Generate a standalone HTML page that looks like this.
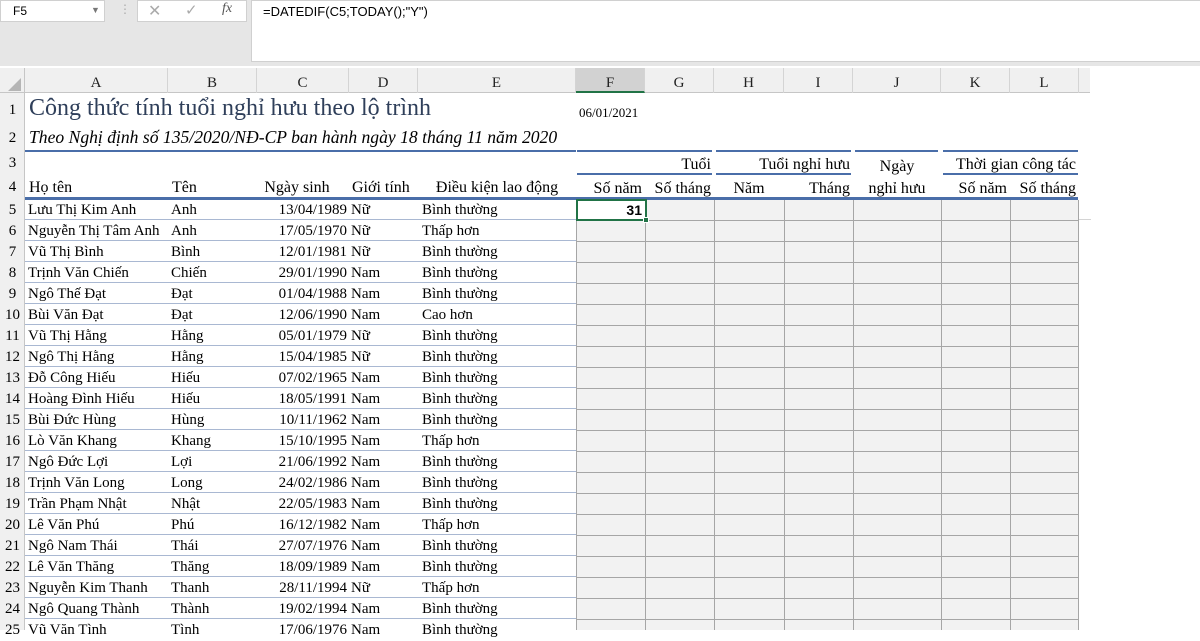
<!DOCTYPE html>
<html><head><meta charset="utf-8"><style>
*{margin:0;padding:0;box-sizing:border-box}
body{width:1200px;height:630px;overflow:hidden;background:#fff;position:relative;font-family:"Liberation Serif",serif;color:#000}
.a{position:absolute;white-space:nowrap}
.top{left:0;top:0;width:1200px;height:66px;background:#e6e6e6}
.hdr{left:0;top:68px;width:1090px;height:25px;background:#f0f0f0;border-bottom:1px solid #c6c6c6}
.ch{position:absolute;top:68px;height:25px;line-height:30px;text-align:center;font-size:15px;border-right:1px solid #d4d4d4;color:#222}
.rn{position:absolute;left:0;width:25px;background:#f0f0f0;border-right:1px solid #c6c6c6;font-size:15px;text-align:center;color:#222}
.t{position:absolute;font-size:15px;white-space:nowrap;line-height:21px}
.hl{position:absolute;height:2px;background:#4a6ea9}
.g{position:absolute;left:25px;width:551px;height:1px;background:#a9b8d2}
</style></head><body>
<div class="a top"></div>
<div class="a" style="left:0;top:0;width:105px;height:22px;background:#fff;border:1px solid #d0d0d0;font-family:'Liberation Sans',sans-serif;font-size:12px;line-height:20px;padding-left:12px">F5</div>
<div class="a" style="left:91px;top:5px;font-size:9px;color:#777">▼</div>
<div class="a" style="left:119px;top:2px;font-size:12px;color:#aaa">⋮</div>
<div class="a" style="left:137px;top:0;width:110px;height:22px;background:#fff;border:1px solid #d0d0d0"></div>
<div class="a" style="left:148px;top:1px;font-family:'Liberation Sans',sans-serif;font-size:16px;color:#aaa">✕</div>
<div class="a" style="left:185px;top:1px;font-family:'DejaVu Sans',sans-serif;font-size:15px;color:#aaa">✓</div>
<div class="a" style="left:222px;top:1px;font-size:14px;font-style:italic;color:#555">fx</div>
<div class="a" style="left:251px;top:0;width:949px;height:62px;background:#fff;border:1px solid #d0d0d0;border-right:none;font-family:'Liberation Sans',sans-serif;font-size:13px;padding:3px 0 0 11px">=DATEDIF(C5;TODAY();"Y")</div>
<div class="a hdr"></div>
<div class="a" style="left:0;top:68px;width:25px;height:25px;border-right:1px solid #c6c6c6"></div>
<div class="a" style="left:8px;top:78px;width:0;height:0;border-left:13px solid transparent;border-bottom:13px solid #b5b5b5"></div>
<div class="ch" style="left:25px;width:143px">A</div>
<div class="ch" style="left:168px;width:89px">B</div>
<div class="ch" style="left:257px;width:92px">C</div>
<div class="ch" style="left:349px;width:69px">D</div>
<div class="ch" style="left:418px;width:158px">E</div>
<div class="ch" style="left:576px;width:69px;background:#d2d2d2;border-bottom:2px solid #217346">F</div>
<div class="ch" style="left:645px;width:69px">G</div>
<div class="ch" style="left:714px;width:70px">H</div>
<div class="ch" style="left:784px;width:69px">I</div>
<div class="ch" style="left:853px;width:88px">J</div>
<div class="ch" style="left:941px;width:69px">K</div>
<div class="ch" style="left:1010px;width:69px">L</div>

<div class="rn" style="top:93px;height:537px"></div>
<div class="t" style="left:0;width:25px;text-align:center;top:100px">1</div>
<div class="t" style="left:0;width:25px;text-align:center;top:128px">2</div>
<div class="t" style="left:0;width:25px;text-align:center;top:153px">3</div>
<div class="t" style="left:0;width:25px;text-align:center;top:177px">4</div>

<div class="a" style="left:29px;top:95px;font-size:24px;color:#2f3f5a">Công thức tính tuổi nghỉ hưu theo lộ trình</div>
<div class="t" style="left:579px;top:102px;font-size:13px">06/01/2021</div>
<div class="a" style="left:29px;top:127px;font-size:17.6px;font-style:italic">Theo Nghị định số 135/2020/NĐ-CP ban hành ngày 18 tháng 11 năm 2020</div>

<div class="hl" style="left:25px;top:150px;width:551px"></div>
<div class="hl" style="left:577px;top:150px;width:135px"></div>
<div class="hl" style="left:716px;top:150px;width:135px"></div>
<div class="hl" style="left:855px;top:150px;width:83px"></div>
<div class="hl" style="left:943px;top:150px;width:135px"></div>
<div class="hl" style="left:577px;top:173px;width:135px"></div>
<div class="hl" style="left:716px;top:173px;width:135px"></div>
<div class="hl" style="left:943px;top:173px;width:135px"></div>
<div class="a" style="left:25px;top:197px;width:1053px;height:3px;background:#4a6ea9"></div>

<div class="t" style="left:645px;width:66px;text-align:right;top:154px;font-size:16px">Tuổi</div>
<div class="t" style="left:714px;width:136px;text-align:right;top:154px;font-size:16px">Tuổi nghỉ hưu</div>
<div class="t" style="left:853px;width:88px;text-align:center;top:156px;font-size:16px">Ngày</div>
<div class="t" style="left:941px;width:135px;text-align:right;top:154px;font-size:16px">Thời gian công tác</div>
<div class="t" style="left:29px;top:177px;font-size:16px">Họ tên</div>
<div class="t" style="left:172px;top:177px;font-size:16px">Tên</div>
<div class="t" style="left:257px;width:80px;text-align:center;top:177px;font-size:16px">Ngày sinh</div>
<div class="t" style="left:352px;top:177px;font-size:16px">Giới tính</div>
<div class="t" style="left:418px;width:158px;text-align:center;top:177px;font-size:16px">Điều kiện lao động</div>
<div class="t" style="left:576px;width:66px;text-align:right;top:178px;font-size:16px">Số năm</div>
<div class="t" style="left:645px;width:66px;text-align:right;top:178px;font-size:16px">Số tháng</div>
<div class="t" style="left:714px;width:70px;text-align:center;top:178px;font-size:16px">Năm</div>
<div class="t" style="left:784px;width:66px;text-align:right;top:178px;font-size:16px">Tháng</div>
<div class="t" style="left:853px;width:88px;text-align:center;top:178px;font-size:16px">nghỉ hưu</div>
<div class="t" style="left:941px;width:66px;text-align:right;top:178px;font-size:16px">Số năm</div>
<div class="t" style="left:1010px;width:66px;text-align:right;top:178px;font-size:16px">Số tháng</div>

<div class="a" style="left:576px;top:200px;width:503px;height:430px;background:#f2f2f2;
background-image:linear-gradient(#a6a6a6,#a6a6a6),linear-gradient(#a6a6a6,#a6a6a6),linear-gradient(#a6a6a6,#a6a6a6),linear-gradient(#a6a6a6,#a6a6a6),linear-gradient(#a6a6a6,#a6a6a6),linear-gradient(#a6a6a6,#a6a6a6),linear-gradient(#a6a6a6,#a6a6a6),linear-gradient(#a6a6a6,#a6a6a6),repeating-linear-gradient(to bottom,transparent 0,transparent 20px,#a6a6a6 20px,#a6a6a6 21px);
background-size:1px 100%,1px 100%,1px 100%,1px 100%,1px 100%,1px 100%,1px 100%,1px 100%,100% 100%;
background-position:0 0,69px 0,138px 0,208px 0,277px 0,365px 0,434px 0,502px 0,0 0;background-repeat:no-repeat"></div>
<div class="a" style="left:1079px;top:219px;width:12px;height:1px;background:#d4d4d4"></div>
<div class="a" style="left:576px;top:199px;width:71px;height:22px;border:2px solid #217346;background:#fff;font-family:'Liberation Sans',sans-serif;font-weight:bold;font-size:14px;text-align:right;padding-right:3px;line-height:18px">31</div>
<div class="a" style="left:643px;top:217px;width:6px;height:6px;background:#217346;border:1px solid #fff"></div>

<div class="g" style="top:219px"></div><div class="g" style="top:240px"></div><div class="g" style="top:261px"></div><div class="g" style="top:282px"></div><div class="g" style="top:303px"></div><div class="g" style="top:324px"></div><div class="g" style="top:345px"></div><div class="g" style="top:366px"></div><div class="g" style="top:387px"></div><div class="g" style="top:408px"></div><div class="g" style="top:429px"></div><div class="g" style="top:450px"></div><div class="g" style="top:471px"></div><div class="g" style="top:492px"></div><div class="g" style="top:513px"></div><div class="g" style="top:534px"></div><div class="g" style="top:555px"></div><div class="g" style="top:576px"></div><div class="g" style="top:597px"></div><div class="g" style="top:618px"></div>
<div style="position:absolute;left:0;top:200px;width:576px;font-size:15px;line-height:21px">
<div style="position:relative;height:21px"><span class="t" style="left:0;width:25px;text-align:center">5</span><span class="t" style="left:28px">Lưu Thị Kim Anh</span><span class="t" style="left:171px">Anh</span><span class="t" style="left:257px;width:90px;text-align:right">13/04/1989</span><span class="t" style="left:351px">Nữ</span><span class="t" style="left:422px">Bình thường</span></div>
<div style="position:relative;height:21px"><span class="t" style="left:0;width:25px;text-align:center">6</span><span class="t" style="left:28px">Nguyễn Thị Tâm Anh</span><span class="t" style="left:171px">Anh</span><span class="t" style="left:257px;width:90px;text-align:right">17/05/1970</span><span class="t" style="left:351px">Nữ</span><span class="t" style="left:422px">Thấp hơn</span></div>
<div style="position:relative;height:21px"><span class="t" style="left:0;width:25px;text-align:center">7</span><span class="t" style="left:28px">Vũ Thị Bình</span><span class="t" style="left:171px">Bình</span><span class="t" style="left:257px;width:90px;text-align:right">12/01/1981</span><span class="t" style="left:351px">Nữ</span><span class="t" style="left:422px">Bình thường</span></div>
<div style="position:relative;height:21px"><span class="t" style="left:0;width:25px;text-align:center">8</span><span class="t" style="left:28px">Trịnh Văn Chiến</span><span class="t" style="left:171px">Chiến</span><span class="t" style="left:257px;width:90px;text-align:right">29/01/1990</span><span class="t" style="left:351px">Nam</span><span class="t" style="left:422px">Bình thường</span></div>
<div style="position:relative;height:21px"><span class="t" style="left:0;width:25px;text-align:center">9</span><span class="t" style="left:28px">Ngô Thế Đạt</span><span class="t" style="left:171px">Đạt</span><span class="t" style="left:257px;width:90px;text-align:right">01/04/1988</span><span class="t" style="left:351px">Nam</span><span class="t" style="left:422px">Bình thường</span></div>
<div style="position:relative;height:21px"><span class="t" style="left:0;width:25px;text-align:center">10</span><span class="t" style="left:28px">Bùi Văn Đạt</span><span class="t" style="left:171px">Đạt</span><span class="t" style="left:257px;width:90px;text-align:right">12/06/1990</span><span class="t" style="left:351px">Nam</span><span class="t" style="left:422px">Cao hơn</span></div>
<div style="position:relative;height:21px"><span class="t" style="left:0;width:25px;text-align:center">11</span><span class="t" style="left:28px">Vũ Thị Hằng</span><span class="t" style="left:171px">Hằng</span><span class="t" style="left:257px;width:90px;text-align:right">05/01/1979</span><span class="t" style="left:351px">Nữ</span><span class="t" style="left:422px">Bình thường</span></div>
<div style="position:relative;height:21px"><span class="t" style="left:0;width:25px;text-align:center">12</span><span class="t" style="left:28px">Ngô Thị Hằng</span><span class="t" style="left:171px">Hằng</span><span class="t" style="left:257px;width:90px;text-align:right">15/04/1985</span><span class="t" style="left:351px">Nữ</span><span class="t" style="left:422px">Bình thường</span></div>
<div style="position:relative;height:21px"><span class="t" style="left:0;width:25px;text-align:center">13</span><span class="t" style="left:28px">Đỗ Công Hiếu</span><span class="t" style="left:171px">Hiếu</span><span class="t" style="left:257px;width:90px;text-align:right">07/02/1965</span><span class="t" style="left:351px">Nam</span><span class="t" style="left:422px">Bình thường</span></div>
<div style="position:relative;height:21px"><span class="t" style="left:0;width:25px;text-align:center">14</span><span class="t" style="left:28px">Hoàng Đình Hiếu</span><span class="t" style="left:171px">Hiếu</span><span class="t" style="left:257px;width:90px;text-align:right">18/05/1991</span><span class="t" style="left:351px">Nam</span><span class="t" style="left:422px">Bình thường</span></div>
<div style="position:relative;height:21px"><span class="t" style="left:0;width:25px;text-align:center">15</span><span class="t" style="left:28px">Bùi Đức Hùng</span><span class="t" style="left:171px">Hùng</span><span class="t" style="left:257px;width:90px;text-align:right">10/11/1962</span><span class="t" style="left:351px">Nam</span><span class="t" style="left:422px">Bình thường</span></div>
<div style="position:relative;height:21px"><span class="t" style="left:0;width:25px;text-align:center">16</span><span class="t" style="left:28px">Lò Văn Khang</span><span class="t" style="left:171px">Khang</span><span class="t" style="left:257px;width:90px;text-align:right">15/10/1995</span><span class="t" style="left:351px">Nam</span><span class="t" style="left:422px">Thấp hơn</span></div>
<div style="position:relative;height:21px"><span class="t" style="left:0;width:25px;text-align:center">17</span><span class="t" style="left:28px">Ngô Đức Lợi</span><span class="t" style="left:171px">Lợi</span><span class="t" style="left:257px;width:90px;text-align:right">21/06/1992</span><span class="t" style="left:351px">Nam</span><span class="t" style="left:422px">Bình thường</span></div>
<div style="position:relative;height:21px"><span class="t" style="left:0;width:25px;text-align:center">18</span><span class="t" style="left:28px">Trịnh Văn Long</span><span class="t" style="left:171px">Long</span><span class="t" style="left:257px;width:90px;text-align:right">24/02/1986</span><span class="t" style="left:351px">Nam</span><span class="t" style="left:422px">Bình thường</span></div>
<div style="position:relative;height:21px"><span class="t" style="left:0;width:25px;text-align:center">19</span><span class="t" style="left:28px">Trần Phạm Nhật</span><span class="t" style="left:171px">Nhật</span><span class="t" style="left:257px;width:90px;text-align:right">22/05/1983</span><span class="t" style="left:351px">Nam</span><span class="t" style="left:422px">Bình thường</span></div>
<div style="position:relative;height:21px"><span class="t" style="left:0;width:25px;text-align:center">20</span><span class="t" style="left:28px">Lê Văn Phú</span><span class="t" style="left:171px">Phú</span><span class="t" style="left:257px;width:90px;text-align:right">16/12/1982</span><span class="t" style="left:351px">Nam</span><span class="t" style="left:422px">Thấp hơn</span></div>
<div style="position:relative;height:21px"><span class="t" style="left:0;width:25px;text-align:center">21</span><span class="t" style="left:28px">Ngô Nam Thái</span><span class="t" style="left:171px">Thái</span><span class="t" style="left:257px;width:90px;text-align:right">27/07/1976</span><span class="t" style="left:351px">Nam</span><span class="t" style="left:422px">Bình thường</span></div>
<div style="position:relative;height:21px"><span class="t" style="left:0;width:25px;text-align:center">22</span><span class="t" style="left:28px">Lê Văn Thăng</span><span class="t" style="left:171px">Thăng</span><span class="t" style="left:257px;width:90px;text-align:right">18/09/1989</span><span class="t" style="left:351px">Nam</span><span class="t" style="left:422px">Bình thường</span></div>
<div style="position:relative;height:21px"><span class="t" style="left:0;width:25px;text-align:center">23</span><span class="t" style="left:28px">Nguyễn Kim Thanh</span><span class="t" style="left:171px">Thanh</span><span class="t" style="left:257px;width:90px;text-align:right">28/11/1994</span><span class="t" style="left:351px">Nữ</span><span class="t" style="left:422px">Thấp hơn</span></div>
<div style="position:relative;height:21px"><span class="t" style="left:0;width:25px;text-align:center">24</span><span class="t" style="left:28px">Ngô Quang Thành</span><span class="t" style="left:171px">Thành</span><span class="t" style="left:257px;width:90px;text-align:right">19/02/1994</span><span class="t" style="left:351px">Nam</span><span class="t" style="left:422px">Bình thường</span></div>
<div style="position:relative;height:21px"><span class="t" style="left:0;width:25px;text-align:center">25</span><span class="t" style="left:28px">Vũ Văn Tình</span><span class="t" style="left:171px">Tình</span><span class="t" style="left:257px;width:90px;text-align:right">17/06/1976</span><span class="t" style="left:351px">Nam</span><span class="t" style="left:422px">Bình thường</span></div>
</div>
</body></html>
